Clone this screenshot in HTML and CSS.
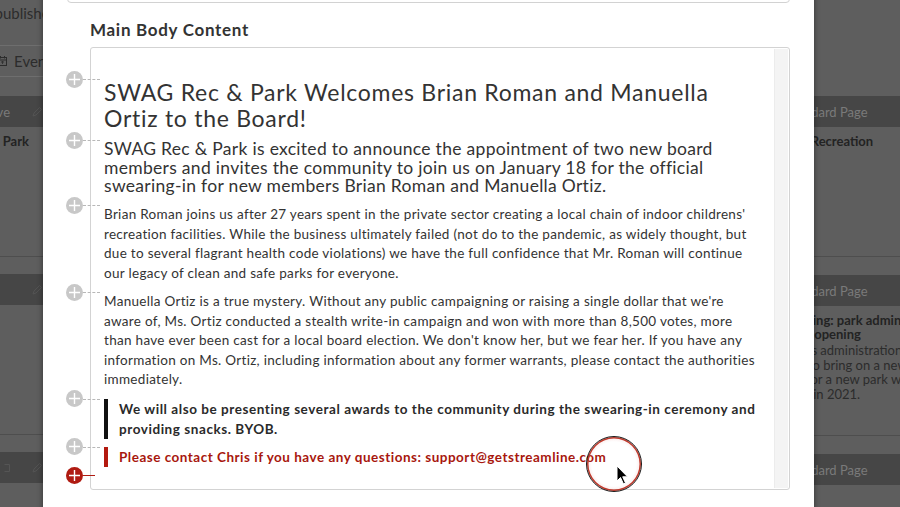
FILE: index.html
```html
<!DOCTYPE html>
<html lang="en">
<head>
<meta charset="utf-8">
<title>Edit Page</title>
<link rel="stylesheet" href="styles.css">
</head>
<body>
<div class="backdrop">
  <div class="col col-left">
    <div class="status">Unpublished</div>
    <div class="filter">
      <svg class="cal" width="9" height="10" viewBox="0 0 9 10"><rect x="0.5" y="1.5" width="8" height="8" fill="none" stroke="#2c2c2c"/><line x1="0.5" y1="4" x2="8.5" y2="4" stroke="#2c2c2c"/><line x1="2.5" y1="0" x2="2.5" y2="2.5" stroke="#2c2c2c"/><line x1="6.5" y1="0" x2="6.5" y2="2.5" stroke="#2c2c2c"/><path d="M3 6 H6 M4.5 5 V8" stroke="#2c2c2c" stroke-width="0.8"/></svg>
      <span>Events</span>
    </div>
    <div class="card">
      <div class="card-bar"><span>Standard Page</span><span class="bar-right">Live <svg class="pencil" width="10" height="10" viewBox="0 0 10 10"><path d="M1 9 L2 6 L7.5 0.5 L9.5 2.5 L4 8 Z" fill="none" stroke="#555" stroke-width="0.9"/></svg></span></div>
      <div class="card-body"><div class="card-title">SWAG Rec. Park</div></div>
    </div>
    <div class="card">
      <div class="card-bar"><span>Standard Page</span><span class="bar-right"><svg class="pencil" width="10" height="10" viewBox="0 0 10 10"><path d="M1 9 L2 6 L7.5 0.5 L9.5 2.5 L4 8 Z" fill="none" stroke="#555" stroke-width="0.9"/></svg></span></div>
      <div class="card-body"></div>
    </div>
    <div class="card">
      <div class="card-bar"><span>Standard Page</span><span class="bar-right"><svg width="6" height="8" viewBox="0 0 6 8"><path d="M0.5 0.5 H5.5 V7.5 H0.5" fill="none" stroke="#555"/></svg> <svg class="pencil" width="10" height="10" viewBox="0 0 10 10"><path d="M1 9 L2 6 L7.5 0.5 L9.5 2.5 L4 8 Z" fill="none" stroke="#555" stroke-width="0.9"/></svg></span></div>
      <div class="card-body"></div>
    </div>
  </div>
  <div class="col col-mid"></div>
  <div class="col col-right">
    <div class="card">
      <div class="card-bar"><span>Standard Page</span></div>
      <div class="card-body"><div class="card-title">Fun Recreation</div></div>
    </div>
    <div class="card">
      <div class="card-bar"><span>Standard Page</span></div>
      <div class="card-body">
        <div class="card-title">Coming: park admin<br>At reopening</div>
        <div class="card-text">Parks administration<br>Set to bring on a new<br>Go for a new park we're<br>Due in 2021.</div>
      </div>
    </div>
    <div class="card">
      <div class="card-bar"><span>Standard Page</span></div>
      <div class="card-body"></div>
    </div>
  </div>
</div>

<div class="modal">
  <div class="field-input"></div>
  <div class="field-label">Main Body Content</div>
  <div class="editor-row">
    <div class="editor">
      <div class="editor-content">
        <h1 class="blk">
          <span class="plus"><svg width="17" height="17" viewBox="0 0 17 17"><circle cx="8.5" cy="8.5" r="8.5" fill="#c8c8c8"/><path d="M8.5 3 V14 M3 8.5 H14" stroke="#fff" stroke-width="1.4"/></svg></span><span class="dash"></span>
          SWAG Rec &amp; Park Welcomes Brian Roman and Manuella<br>Ortiz to the Board!
        </h1>
        <h2 class="blk">
          <span class="plus"><svg width="17" height="17" viewBox="0 0 17 17"><circle cx="8.5" cy="8.5" r="8.5" fill="#c8c8c8"/><path d="M8.5 3 V14 M3 8.5 H14" stroke="#fff" stroke-width="1.4"/></svg></span><span class="dash"></span>
          SWAG Rec &amp; Park is excited to announce the appointment of two new board<br>members and invites the community to join us on January 18 for the official<br>swearing-in for new members Brian Roman and Manuella Ortiz.
        </h2>
        <p class="blk">
          <span class="plus"><svg width="17" height="17" viewBox="0 0 17 17"><circle cx="8.5" cy="8.5" r="8.5" fill="#c8c8c8"/><path d="M8.5 3 V14 M3 8.5 H14" stroke="#fff" stroke-width="1.4"/></svg></span><span class="dash"></span>
          Brian Roman joins us after 27 years spent in the private sector creating a local chain of indoor childrens'<br>recreation facilities. While the business ultimately failed (not do to the pandemic, as widely thought, but<br>due to several flagrant health code violations) we have the full confidence that Mr. Roman will continue<br>our legacy of clean and safe parks for everyone.
        </p>
        <p class="blk">
          <span class="plus"><svg width="17" height="17" viewBox="0 0 17 17"><circle cx="8.5" cy="8.5" r="8.5" fill="#c8c8c8"/><path d="M8.5 3 V14 M3 8.5 H14" stroke="#fff" stroke-width="1.4"/></svg></span><span class="dash"></span>
          Manuella Ortiz is a true mystery. Without any public campaigning or raising a single dollar that we're<br>aware of, Ms. Ortiz conducted a stealth write-in campaign and won with more than 8,500 votes, more<br>than have ever been cast for a local board election. We don't know her, but we fear her. If you have any<br>information on Ms. Ortiz, including information about any former warrants, please contact the authorities<br>immediately.
        </p>
        <blockquote class="blk quote">
          <span class="plus"><svg width="17" height="17" viewBox="0 0 17 17"><circle cx="8.5" cy="8.5" r="8.5" fill="#c8c8c8"/><path d="M8.5 3 V14 M3 8.5 H14" stroke="#fff" stroke-width="1.4"/></svg></span><span class="dash"></span>
          We will also be presenting several awards to the community during the swearing-in ceremony and<br>providing snacks. BYOB.
        </blockquote>
        <blockquote class="blk quote quote-red">
          <span class="plus"><svg width="17" height="17" viewBox="0 0 17 17"><circle cx="8.5" cy="8.5" r="8.5" fill="#c8c8c8"/><path d="M8.5 3 V14 M3 8.5 H14" stroke="#fff" stroke-width="1.4"/></svg></span><span class="dash"></span>
          Please contact Chris if you have any questions: support@getstreamline.com
        </blockquote>
        <p class="blk empty">
          <span class="plus"><svg width="17" height="17" viewBox="0 0 17 17"><circle cx="8.5" cy="8.5" r="8.5" fill="#b01b12"/><path d="M8.5 3 V14 M3 8.5 H14" stroke="#fff" stroke-width="1.4"/></svg></span><span class="dash dash-red"></span>
        </p>
      </div>
      <div class="scrollbar"></div>
    </div>
  </div>
</div>

<div class="click-ring"></div>
<svg class="cursor" width="14" height="21" viewBox="0 0 14 21"><path d="M1 1 V16 L4.5 12.5 L7.5 19 L9.5 18 L6.7 11.8 L11.5 11.8 Z" fill="#000" stroke="#fff" stroke-width="1"/></svg>
</body>
</html>
```

FILE: styles.css
```css
* { box-sizing: border-box; }
html, body { margin: 0; padding: 0; }
body {
  width: 900px;
  height: 507px;
  overflow: hidden;
  background: #5e5e5e;
  font-family: Lato, "Open Sans", sans-serif;
  position: relative;
}

/* dimmed page behind the modal */
.backdrop {
  display: grid;
  grid-template-columns: 280px 686px 300px;
  column-gap: 20px;
  margin-left: -230px;
  width: 1306px;
  color: #262626;
}
.col { display: flex; flex-direction: column; }
.col-right { padding-top: 96px; }
.status {
  height: 26px;
  line-height: 26px;
  font-size: 15px;
  text-align: right;
  color: #2c2c2c;
  margin-right: -8px;
}
.filter {
  margin-top: 19px;
  height: 32px;
  border-top: 1px solid #6e6e6e;
  border-bottom: 1px solid #6e6e6e;
  display: flex;
  align-items: center;
  justify-content: flex-end;
  gap: 7px;
  margin-right: -8px;
  font-size: 15px;
  color: #2c2c2c;
}
.card {
  margin-top: 19px;
  height: 161px;
  border-bottom: 1px solid #4e4e4e;
  display: flex;
  flex-direction: column;
}
.col-right .card { margin-top: 0; margin-bottom: 18px; }
.col-left .card + .card { margin-top: 17px; }
.card-bar {
  height: 31px;
  flex: none;
  background: #464646;
  display: flex;
  align-items: center;
  justify-content: space-between;
  padding: 0 8px 0 10px;
  font-size: 13px;
  color: #7a7a7a;
}
.bar-right { display: flex; align-items: center; gap: 22px; color: #7a7a7a; }
.card-body { padding: 8px 21px 8px 10px; }
.card-title {
  font-weight: 700;
  font-size: 13px;
  line-height: 13.5px;
  color: #232323;
  text-align: right;
}
.col-right .card-title { text-align: left; }
.col-right .card-text {
  margin-top: 2px;
  font-size: 13px;
  line-height: 14.5px;
  color: #2c2c2c;
}

/* modal */
.modal {
  position: absolute;
  left: 43px;
  top: -36px;
  width: 771px;
  height: 560px;
  background: #fff;
  padding: 0 24px;
  box-shadow: 0 0 6px rgba(0, 0, 0, 0.45);
  color: #333;
}
.field-input {
  margin-top: 5px;
  height: 34px;
  border: 1px solid #d2d2d2;
  border-radius: 4px;
}
.field-label {
  margin: 17px 0 0 23px;
  height: 20px;
  line-height: 20px;
  font-size: 17px;
  letter-spacing: 0.7px;
  font-weight: 700;
  color: #333;
}
.editor-row { margin-top: 7px; padding-left: 23px; }
.editor {
  height: 443px;
  border: 1px solid #d3d3d3;
  border-radius: 3px;
  display: flex;
}
.editor-content {
  flex: 1;
  padding: 31px 0 0 13px;
}
.scrollbar {
  width: 14px;
  background: #f4f4f4;
  border-left: 1px solid #ececec;
  margin: 1px 1px 1px 0;
}
.blk { position: relative; margin: 0; }
.plus {
  position: absolute;
  left: -38px;
  top: -8.5px;
  width: 17px;
  height: 17px;
  display: block;
}
.plus svg { display: block; }
.dash {
  position: absolute;
  left: -21px;
  top: 0;
  width: 17px;
  border-top: 1px dashed #b8b8b8;
}
.dash-red { border-top: 1px solid #b01b12; width: 12px; }

h1.blk {
  font-size: 23px;
  letter-spacing: 0.72px;
  line-height: 26px;
  font-weight: 400;
  color: #333;
  margin-bottom: 9px;
}
h2.blk {
  font-size: 17.5px;
  letter-spacing: 0.3px;
  line-height: 18.7px;
  font-weight: 400;
  color: #333;
  margin-bottom: 9px;
}
p.blk {
  font-size: 13.5px;
  letter-spacing: 0.3px;
  line-height: 19.5px;
  color: #333;
  margin-bottom: 9px;
}
.quote {
  font-size: 13.5px;
  letter-spacing: 0.56px;
  font-weight: 700;
  line-height: 20px;
  color: #2a2a2a;
  border-left: 4px solid #111;
  padding-left: 11px;
  margin-bottom: 8px;
}
.quote .plus { left: -42px; }
.quote .dash { left: -25px; }
.quote-red {
  border-left-color: #b3190f;
  color: #a8170e;
  letter-spacing: 0.5px;
  margin-bottom: 8.5px;
}
p.empty { height: 14px; }

.click-ring {
  position: absolute;
  left: 586px;
  top: 436px;
  width: 56px;
  height: 56px;
  border-radius: 50%;
  border: 1.5px solid #1a1a1a;
  box-shadow: inset 0 0 0 1.5px #c0392b;
  background: radial-gradient(circle, rgba(255,255,255,0) 0, rgba(255,255,255,0) 58%, rgba(232,150,150,0.35) 78%, rgba(226,130,130,0.7) 94%);
}
.cursor {
  position: absolute;
  left: 616px;
  top: 465px;
}
```
